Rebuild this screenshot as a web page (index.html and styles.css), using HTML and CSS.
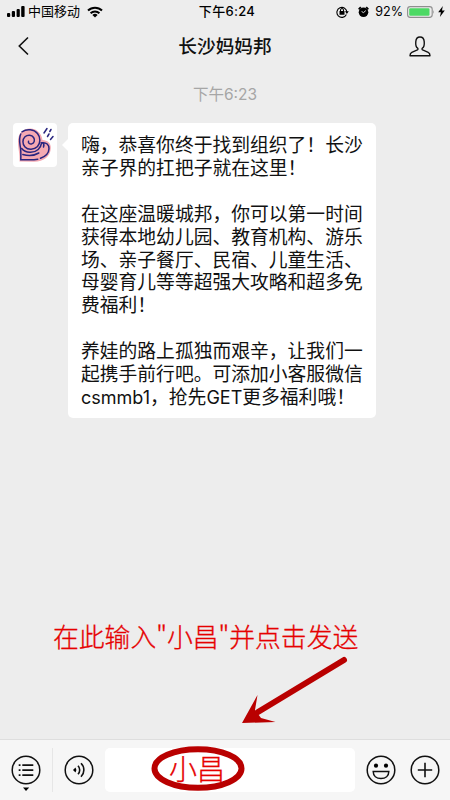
FILE: index.html
```
<!DOCTYPE html>
<html lang="zh-CN">
<head>
    <meta charset="UTF-8">
    <title>长沙妈妈邦</title>
    <link rel="stylesheet" href="styles.css">
</head>
<body>

<div class="phone">
    <div class="status-bar">
        <div class="status-left">
            <svg class="signal" width="18" height="12" viewBox="0 0 18 12">
                <rect x="0" y="7" width="3.2" height="4" rx="1"/>
                <rect x="4.8" y="5" width="3.2" height="6" rx="1"/>
                <rect x="9.6" y="3" width="3.2" height="8" rx="1"/>
                <rect x="14.2" y="0" width="3.4" height="11" rx="1"/>
            </svg>
            <span class="carrier">中国移动</span>
            <svg class="wifi" width="16" height="12" viewBox="0 0 16 12">
                <path d="M1 4.5a10 10 0 0 1 14 0M3.6 7.2a6.3 6.3 0 0 1 8.8 0" fill="none" stroke="#000" stroke-width="2"/>
                <path d="M5.4 9a3.8 3.8 0 0 1 5.2 0L8 11.6z"/>
            </svg>
        </div>
        <div class="status-time">下午6:24</div>
        <div class="status-right">
            <svg class="lock" width="13" height="12" viewBox="0 0 13 12">
                <path d="M10.4 8.6a5 5 0 1 1 .5-2.4" fill="none" stroke="#000" stroke-width="1.1"/>
                <path d="M9 5.3h3.8L10.9 8z"/>
                <rect x="3.5" y="5" width="5" height="3.8" rx=".4"/>
                <path d="M4.5 5V4a1.5 1.5 0 0 1 3 0v1" fill="none" stroke="#000"/>
            </svg>
            <svg class="alarm" width="11" height="12" viewBox="0 0 11 12">
                <circle cx="5.5" cy="6.3" r="4.8"/>
                <path d="M.7 3.3 2.8 1.2M10.3 3.3 8.2 1.2" stroke="#000" stroke-width="1.8"/>
                <path d="M5.5 6.6 7.8 4.6M5.5 6.6 3.6 5.5" fill="none" stroke="#ededed" stroke-width=".9"/>
            </svg>
            <span class="percent">92%</span>
            <svg class="battery" width="28" height="12" viewBox="0 0 28 12">
                <rect x=".6" y=".6" width="24.6" height="10.8" rx="2.6" fill="none" stroke="#8e8e8e" stroke-width="1.1"/>
                <rect x="2.2" y="2.2" width="20.3" height="7.6" rx="1.2" fill="#4cd964"/>
                <path d="M26.2 4q1.5 2 0 4z" fill="#8e8e8e"/>
            </svg>
            <svg class="bolt" width="7" height="11" viewBox="0 0 7 11">
                <path d="M4.8 0 .2 6.2h2.7L1.9 11 6.8 4.5H4z"/>
            </svg>
        </div>
    </div>

    <div class="nav-bar">
        <svg class="back" width="11" height="20" viewBox="0 0 11 20">
            <path d="M10 1.5 1.3 10l8.7 8.5" fill="none" stroke="#111" stroke-width="1.6"/>
        </svg>
        <div class="nav-title">长沙妈妈邦</div>
        <svg class="profile" width="22" height="21" viewBox="0 0 22 21">
            <path d="M8.6 12.2C6.3 10.7 6.6 8 6.8 5.6 7 2.6 8.6 1 11 1s4 1.6 4.2 4.6c.2 2.4.5 5.1-1.8 6.6-.6.4-.4 1.4.2 1.7l5.6 2.4c1.4.6 1.800 1.500 1.800 3.400H1c0-1.900.4-2.800 1.800-3.400l5.600-2.400c.6-.3.8-1.300.2-1.700z" fill="none" stroke="#111" stroke-width="1.4" stroke-linejoin="round"/>
        </svg>
    </div>

    <div class="chat">
        <div class="chat-time">下午6:23</div>
        <div class="message">
            <div class="avatar">
                <svg width="44" height="44" viewBox="0 0 44 44">
                    <path d="M6.500 38.500C7 31 5 26 5 18.500 5 10.500 10 5.500 17 5.500c6.500 0 11.500 4.500 12.500 11.500 5 .3 8.500 3 8.300 8C37.500 33.500 31 38.500 21 38.800z" fill="#f5a9b2"/>
                    <g fill="none" stroke="#29257f" stroke-width="1.500" stroke-linecap="round">
                        <path d="M9 8.800c5-3.500 12-2.500 15.500 1.700 3.300 4 3 9.500 0 13-3.500 3.600-9.500 3.700-12.500.5-2.800-3-2.700-7.700 0-10.200 2.600-2.300 6.800-2 8.600.7 1.600 2.500.7 5.600-1.800 6.400-2 .6-3.800-.9-3.300-2.600"/>
                        <path d="M7.800 11c-2.500 5-.8 10-.2 14.500.5 4 .2 7.500.2 11.300 6-.3 11 .5 17-.6"/>
                        <path d="M27.500 35.200c5-1.700 8.300-5.600 8.500-9.500.2-4-2.800-6.500-6.800-6 1.600.8 2 2.500 1.300 4.300"/>
                        <path d="M8.700 25.500c4 4.700 12 5 16.500 1 2-1.800 3-4 3.300-6.300"/>
                        <path d="M9.800 31.500c5.500 1.700 12 .9 16-1.500"/>
                        <path d="M31 10 34 5.500M34.500 13.500l1.500-2.500M38 6.500 36.800 8.500M37.500 16.500 40 13.500"/>
                    </g>
                </svg>
            </div>
            <div class="bubble">
                <p>嗨，恭喜你终于找到组织了！长沙<br>亲子界的扛把子就在这里！</p>
                <p>在这座温暖城邦，你可以第一时间<br>获得本地幼儿园、教育机构、游乐<br>场、亲子餐厅、民宿、儿童生活、<br>母婴育儿等等超强大攻略和超多免<br>费福利！</p>
                <p>养娃的路上孤独而艰辛，让我们一<br>起携手前行吧。可添加小客服微信<br><span class="latin">csmmb1</span>，抢先<span class="latin">GET</span>更多福利哦！</p>
            </div>
        </div>
        <div class="hint">在此输入"小昌"并点击发送</div>
        <svg class="arrow" width="108" height="70" viewBox="0 0 108 70">
            <path d="M102 5 16 57" stroke="#b90000" stroke-width="6" stroke-linecap="round"/>
            <path d="M0 68 15.500 40 13 55l6 8 14.500 4z" fill="#b90000"/>
        </svg>
    </div>

    <div class="input-bar">
        <div class="menu">
            <svg width="30" height="36" viewBox="0 0 30 36">
                <circle cx="15" cy="15" r="13.8" fill="none" stroke="#111" stroke-width="1.5"/>
                <path d="M11.3 10.2h11M11.3 15.2h11M11.3 20.2h11M7.7 10.2h1.8M7.7 15.2h1.8M7.7 20.2h1.8" stroke="#111" stroke-width="1.7"/>
                <path d="M12 32.5h6.2L15 36z"/>
            </svg>
        </div>
        <svg class="voice" width="30" height="30" viewBox="0 0 30 30">
            <circle cx="15" cy="15" r="13.8" fill="none" stroke="#111" stroke-width="1.5"/>
            <path d="M9 15l2.500-2.500q1.800 2.500 0 5z"/>
            <path d="M14 10.800a6 6 0 0 1 0 8.400M17 8.200a9.500 9.500 0 0 1 0 13.600" fill="none" stroke="#111" stroke-width="1.6"/>
        </svg>
        <div class="text-input">
            <span class="typed">小昌</span>
            <svg class="ring" width="94" height="45" viewBox="0 0 94 45">
                <ellipse cx="47" cy="22.5" rx="43.5" ry="19.3" fill="none" stroke="#b90000" stroke-width="6"/>
            </svg>
        </div>
        <svg class="emoji" width="30" height="30" viewBox="0 0 30 30">
            <circle cx="15" cy="15" r="13.8" fill="none" stroke="#111" stroke-width="1.5"/>
            <circle cx="10" cy="10.7" r="2.1"/>
            <circle cx="20" cy="10.7" r="2.1"/>
            <path d="M7.2 16.500h15.600c0 4.500-3.300 7.100-7.800 7.100s-7.800-2.600-7.800-7.100z" fill="none" stroke="#111" stroke-width="1.5"/>
        </svg>
        <svg class="more" width="30" height="30" viewBox="0 0 30 30">
            <circle cx="15" cy="15" r="13.8" fill="none" stroke="#111" stroke-width="1.5"/>
            <path d="M15 7.8v14.400M7.8 15h14.400" stroke="#111" stroke-width="1.6"/>
        </svg>
    </div>
</div>

</body>
</html>
```

FILE: styles.css
```
* {
    margin: 0;
    padding: 0;
    box-sizing: border-box;
}

body {
    font-family: Inter, 'Noto Sans CJK SC', sans-serif;
    color: #111;
    background: #ededed;
}

svg {
    display: block;
    flex: none;
}

.phone {
    display: flex;
    flex-direction: column;
    width: 450px;
    height: 800px;
    overflow: hidden;
}

/* Status bar */
.status-bar {
    display: grid;
    grid-template-columns: 1fr auto 1fr;
    align-items: center;
    height: 23px;
    padding: 0 5px 0 7px;
    font-size: 13px;
    line-height: 23px;
    color: #000;
}

.status-left,
.status-right {
    display: flex;
    align-items: center;
}

.status-right {
    justify-content: flex-end;
}

.carrier {
    margin: 0 7px 0 3px;
}

.status-time {
    padding-left: 2px;
    font-weight: 500;
    letter-spacing: .3px;
}

.lock {
    margin-right: 9px;
}

.alarm {
    margin-right: 6px;
}

.percent {
    margin-right: 4px;
    font-size: 12.6px;
}

.bolt {
    margin-left: 3px;
}

/* Title bar */
.nav-bar {
    display: flex;
    align-items: center;
    justify-content: space-between;
    height: 46px;
    padding: 0 19px 0 18px;
}

.nav-title {
    margin-left: 12px;
    padding-top: 2px;
    font-size: 18.7px;
    font-weight: 500;
    line-height: 46px;
}

/* Chat */
.chat {
    position: relative;
    flex: 1;
    padding: 16px 13px 0;
}

.chat-time {
    height: 38px;
    font-size: 15.5px;
    line-height: 20px;
    text-align: center;
    color: #a6a6a6;
}

.message {
    display: flex;
    align-items: flex-start;
    gap: 11px;
}

.avatar {
    width: 44px;
    height: 44px;
    border-radius: 4px;
    background: #fff;
}

.bubble {
    position: relative;
    width: 308px;
    height: 295px;
    padding: 12px 0 0 13px;
    border-radius: 5px;
    background: #fff;
    font-size: 18.8px;
    line-height: 22.9px;
    white-space: nowrap;
}

.bubble::before {
    content: '';
    position: absolute;
    left: -6px;
    top: 16px;
    border: 6px solid transparent;
    border-left: 0;
    border-right-color: #fff;
}

.bubble p + p {
    margin-top: 22.9px;
}

.latin {
    font-size: 18px;
}

/* Red notes over the chat */
.hint {
    position: absolute;
    left: 53px;
    top: 549px;
    font-family: 'Noto Sans CJK SC', sans-serif;
    font-size: 25.8px;
    font-weight: 300;
    line-height: 36px;
    white-space: nowrap;
    color: #e60000;
    -webkit-text-stroke: .3px #e60000;
}

.arrow {
    position: absolute;
    left: 242px;
    top: 586px;
}

/* Input bar */
.input-bar {
    display: flex;
    align-items: center;
    height: 61px;
    border-top: 1px solid #dedede;
    background: #f6f6f6;
}

.menu {
    width: 53px;
    height: 44px;
    padding: 7px 0 0 11px;
    border-right: 1px solid #e6e6e6;
}

.voice {
    margin: 0 11px;
}

.text-input {
    position: relative;
    width: 250px;
    height: 44px;
    padding-left: 64px;
    border-radius: 5px;
    background: #fff;
}

.typed {
    font-family: 'Noto Sans CJK SC', sans-serif;
    font-size: 28px;
    font-weight: 300;
    line-height: 41px;
    color: #e60000;
    -webkit-text-stroke: .3px #e60000;
}

.ring {
    position: absolute;
    left: 46px;
    top: -2px;
}

.emoji {
    margin: 0 14px 0 11px;
}
```
